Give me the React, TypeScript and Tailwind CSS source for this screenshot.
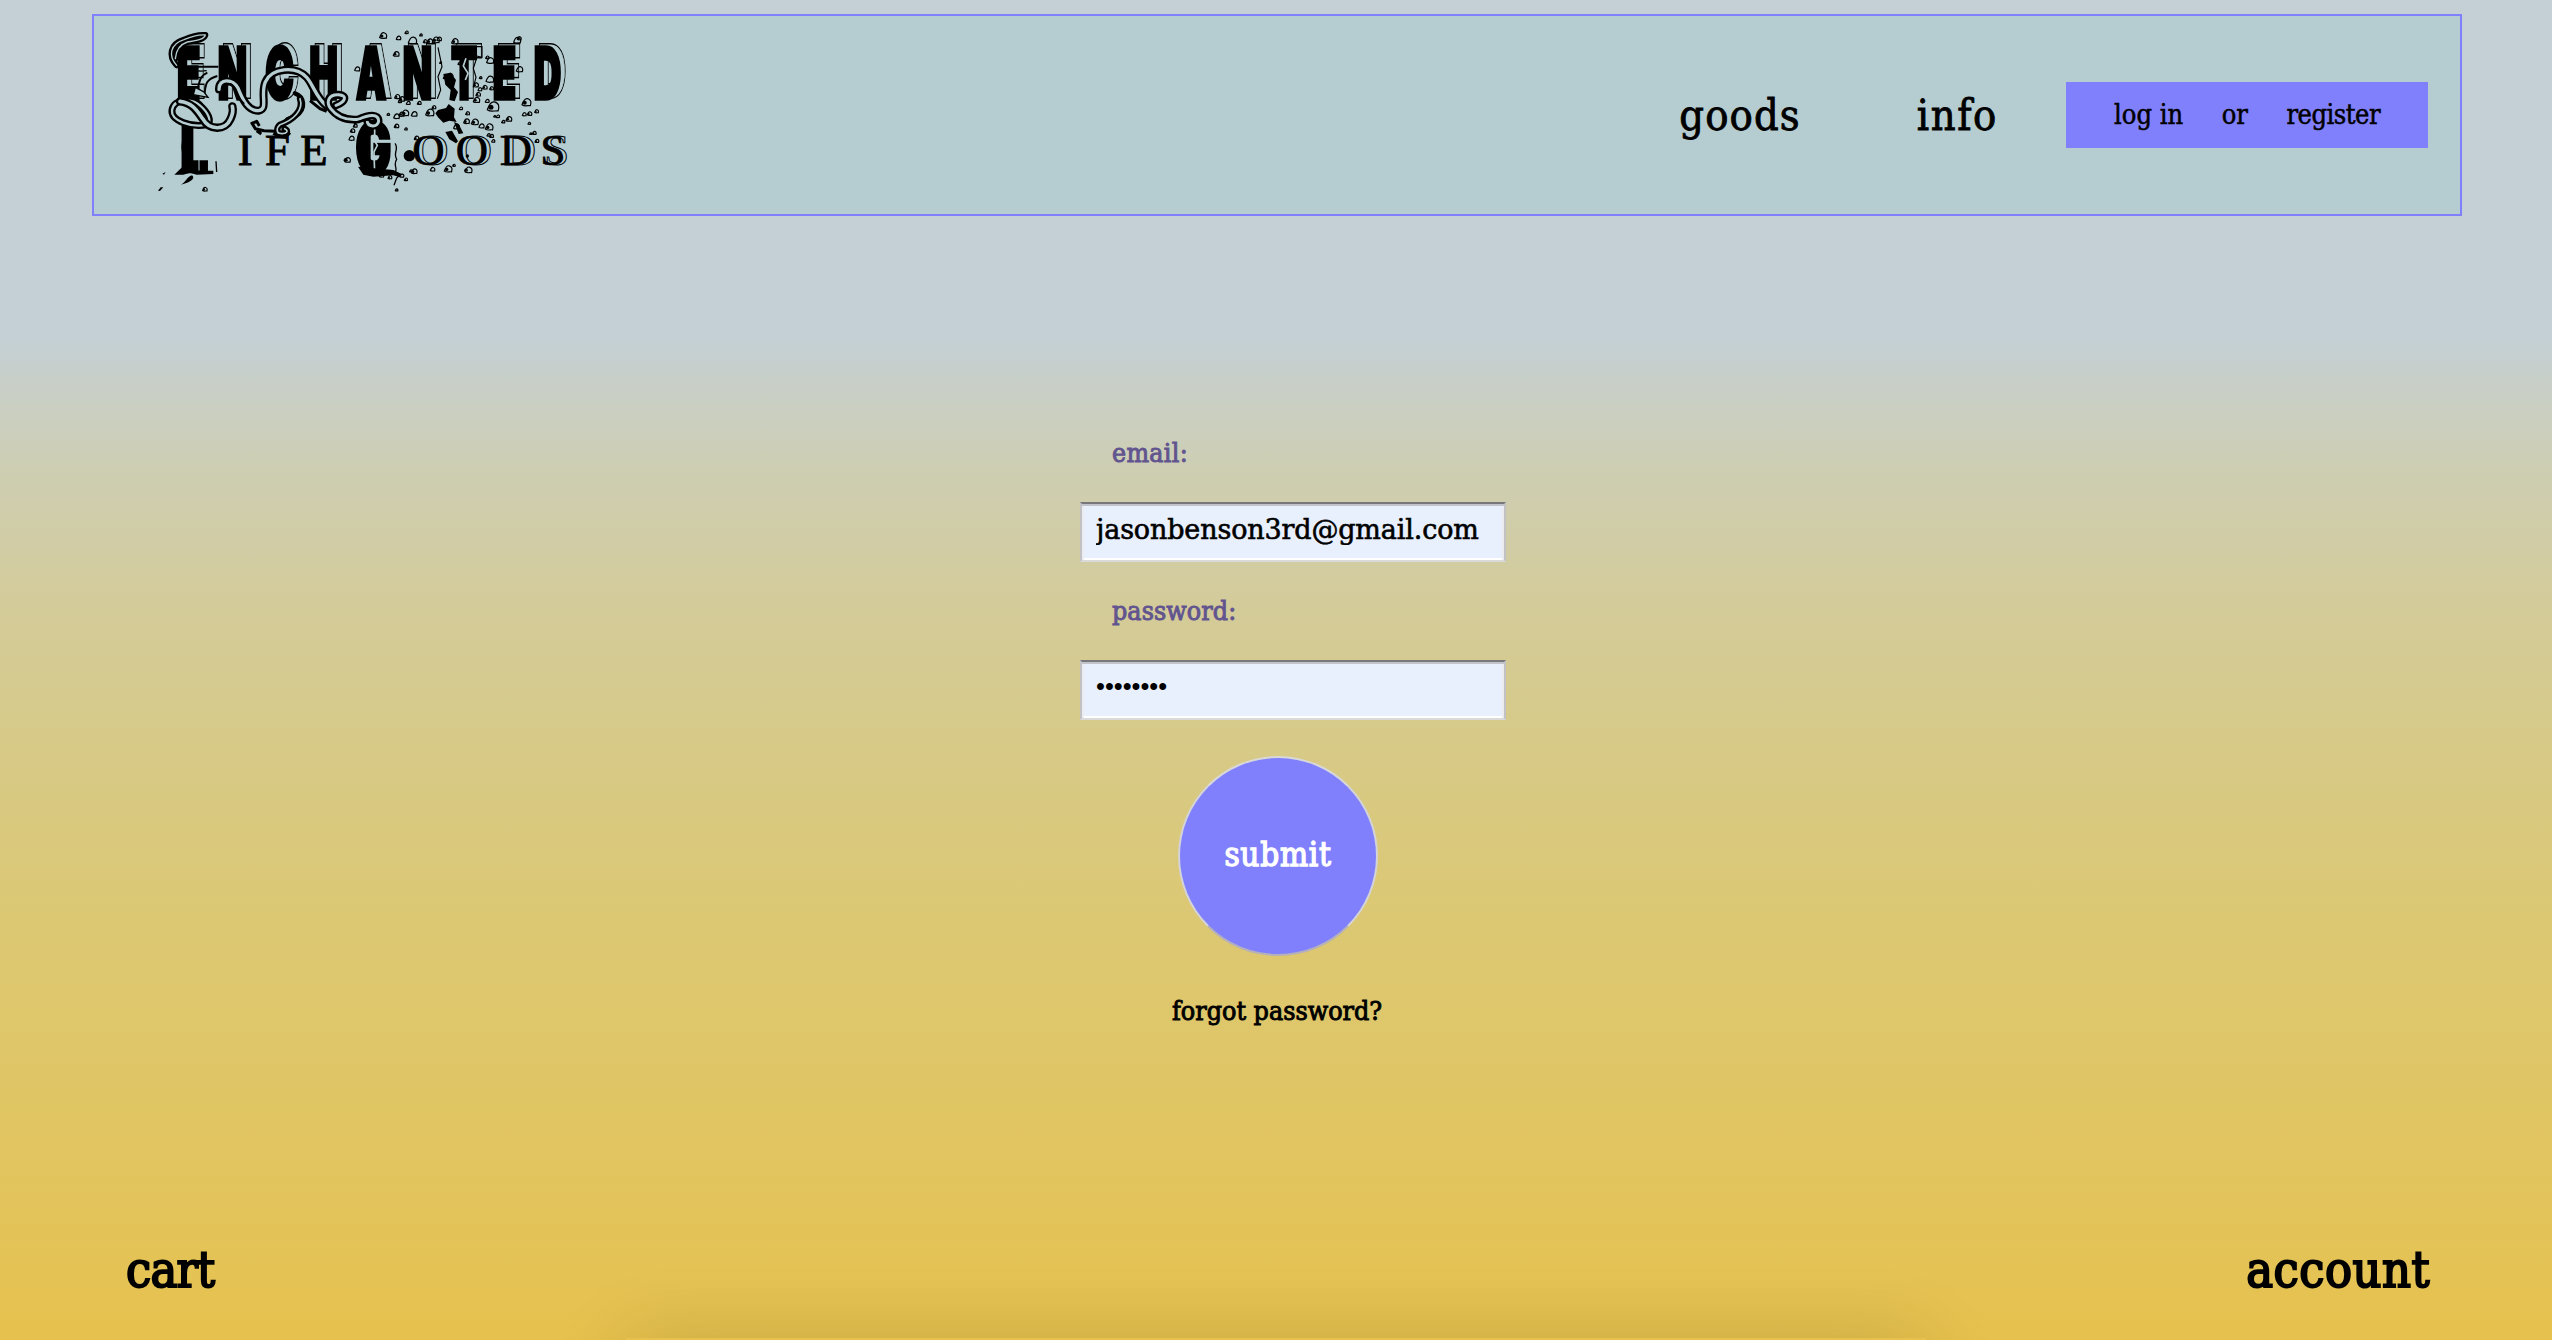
import React from "react";

const SERIF = "font-['DejaVu_Serif_Condensed','DejaVu_Serif',serif]";
const BG = "#b5cdd1";

/* A hollow ribbon: dark outline around a pale body. */
function Ribbon({ d, w = 19 }: { d: string; w?: number }) {
  return (
    <g fill="none" strokeLinecap="round" strokeLinejoin="round">
      <path d={d} stroke="#000" strokeWidth={w + 2} />
      <path d={d} stroke={BG} strokeWidth={w - 12} />
    </g>
  );
}

/* x, y, size of the outlined ink drops */
const drops: [number, number, number][] = [
  [910, 107, 11], [956, 114, 7], [980, 97, 5], [1023, 105, 4], [998, 122, 13], [1050, 124, 9], [1068, 120, 11], [1078, 117, 7],
  [1036, 124, 6], [1125, 124, 10], [1312, 121, 11], [1318, 115, 6], [949, 162, 9], [832, 207, 8], [1082, 188, 3], [1139, 190, 5],
  [1231, 182, 11], [1222, 172, 5], [1202, 233, 4], [1230, 238, 12], [1215, 262, 7], [1235, 265, 6], [1319, 208, 10], [952, 290, 8],
  [966, 297, 9], [985, 309, 6], [1018, 309, 6], [925, 343, 4], [950, 349, 9], [965, 343, 8], [976, 339, 11], [1003, 342, 9],
  [1050, 338, 13], [1062, 322, 6], [1143, 325, 5], [1163, 340, 6], [1240, 320, 18], [1222, 303, 6], [1340, 307, 14], [1370, 334, 6],
  [1333, 343, 6], [1349, 341, 7], [1287, 357, 9], [1254, 349, 5], [1270, 365, 5], [1244, 349, 3], [1348, 370, 4], [1160, 364, 9],
  [1185, 366, 11], [1205, 378, 8], [1228, 381, 12], [950, 378, 7], [978, 387, 4], [1010, 414, 7], [1235, 408, 6], [1240, 423, 5],
  [1226, 405, 5], [1363, 399, 6], [1352, 401, 3], [1371, 423, 6], [803, 480, 9], [796, 479, 4], [1003, 514, 9], [993, 513, 4],
  [1058, 508, 7], [1105, 507, 12], [1122, 496, 4], [1166, 510, 11], [1158, 510, 4], [978, 538, 5], [966, 527, 6], [950, 570, 4],
  [818, 392, 7], [815, 415, 8], [826, 377, 6], [930, 532, 6], [905, 526, 7], [1190, 300, 10], [1195, 283, 7], [1130, 380, 9], [375, 568, 7],
  [1188, 255, 8], [1200, 268, 6], [1110, 228, 10], [1095, 232, 5], [960, 304, 5],
];

function drop(x: number, y: number, r: number) {
  return `M${x - r} ${y + r * 0.5}C${x - r * 0.7} ${y - r * 0.4} ${x - r * 0.3} ${y - r * 0.9} ${x + r * 0.2} ${y - r * 0.8}C${x + r} ${y - r * 0.6} ${x + r} ${y + r * 0.1} ${x + r * 0.8} ${y + r * 0.7}C${x + r * 0.3} ${y + r * 0.6} ${x - r * 0.4} ${y + r} ${x - r} ${y + r * 0.5}Z`;
}

const xs = (list: number[], s: number) => list.map((v) => v / s).join(" ");
const topX = [291, 413, 556, 688, 828, 968, 1113, 1238, 1361];

function Logo() {
  return (
    <svg viewBox="222 90 1260 504" className="h-[168px] w-[420px] overflow-visible" role="img" aria-label="Enchanted Life Goods">
      {/* upper line, with a thin offset outline behind it */}
      <g fontFamily="Inter, Roboto, sans-serif" fontWeight={900} fontSize={216}>
        <use href="#word-top" x={14} y={-5} fill="#000" stroke="#000" strokeWidth={12} />
        <use href="#word-top" x={14} y={-5} fill={BG} stroke={BG} strokeWidth={3} />
        <g fill="#000" stroke="#000" strokeWidth={10}>
          <text id="word-top" transform="scale(.53 1)" x={xs(topX, 0.53)} y={296}>ENCHANTED</text>
        </g>
      </g>
      {/* lower line, small capitals */}
      <g fontFamily="'Liberation Serif', serif" fontSize={134}>
        <g fill="#000" stroke="#000" strokeWidth={3}>
          <text x="473 555 661" y={495}>IFE</text>
        </g>
        <use href="#word-goods" x={12} y={0} fill={BG} stroke="#000" strokeWidth={3} />
        <g fill="#000" stroke="#000" strokeWidth={2}>
          <text id="word-goods" x="997 1127 1259 1381" y={495}>OODS</text>
        </g>
      </g>
      {/* initials */}
      <g fontFamily="Inter, Roboto, sans-serif" fontWeight={900} stroke="#000" strokeWidth={8}>
        <text transform="scale(.76 1)" x={301 / 0.76} y={516} fontSize={196}>L</text>
        <text transform="scale(.68 1)" x={826 / 0.68} y={520} fontSize={212}>G</text>
      </g>
      <path d="M842 395L872 376V518L842 500L834 470V420Z" />
      <g fill="none" stroke={BG} strokeWidth={5}>
        <path d="M884 382V424L892 436L882 456L884 522M884 425H950" />
        <path d="M357 480V512" strokeWidth={3} />
        <path d="M1158 175L1150 198L1164 220L1156 240M1128 300L1134 340L1128 360L1140 395" />
      </g>
      <path d="M945 430C958 445 938 460 950 478C938 495 955 505 945 518L962 522L950 534L942 556M312 388L306 440L312 500M408 484L410 516" fill="none" stroke="#000" strokeWidth={4} />

      {/* ribbons */}
      <Ribbon d="M290 196C264 168 270 132 312 119C335 109 356 103 376 105C372 120 345 122 322 126C298 134 288 150 286 176" w={16} />
      <path d="M330 200H415M350 272C362 250 352 232 382 218M372 292C378 262 370 240 412 228" fill="none" stroke="#000" strokeWidth={6} />
      <path d="M340 210C352 214 366 214 380 212M346 262L340 284L384 292L372 276Z" fill={BG} stroke="#000" strokeWidth={4} />
      <Ribbon d="M382 374C332 384 272 362 276 330C282 296 336 292 362 318C384 338 396 362 382 374" w={19} />
      <Ribbon d="M300 304C338 308 352 334 368 356C388 392 436 392 451 358C458 344 460 330 457 319" w={23} />
      <Ribbon d="M417 268C416 234 458 236 474 264C490 304 506 334 536 332C566 328 540 284 556 246C574 204 646 196 680 232C700 254 706 290 740 318" w={22} />
      <path d="M436 262C450 240 464 258 472 290L492 312" fill="none" stroke="#000" strokeWidth={7} />
      <path d="M645 280C672 290 680 324 648 348L622 358" fill="none" stroke="#000" strokeWidth={14} strokeLinecap="round" />
      <Ribbon d="M660 296C672 330 640 360 600 374C588 384 590 400 600 400C620 404 628 392 614 386" w={17} />
      <path d="M514 366L526 386L552 392L586 394M512 372L530 364L538 378M530 392L544 402M580 400C596 412 616 414 630 398" fill="none" stroke="#000" strokeWidth={9} strokeLinejoin="round" />
      <path d="M690 302L720 326L740 334" fill="none" stroke="#000" strokeWidth={9} />
      <Ribbon d="M768 316C796 306 804 286 776 284C744 282 738 308 752 326C772 352 800 362 836 358C866 344 896 340 896 364C890 384 866 380 862 366" w={21} />
      <path d="M822 372C840 358 870 356 888 368" fill="none" stroke="#000" strokeWidth={5} />

      {/* ink */}
      <g fill="none" stroke="#000" strokeWidth={3.6}>
        {drops.map(([x, y, r], i) => <path key={i} d={drop(x, y, r)} />)}
      </g>
      <g>
        {drops.filter((_, i) => i % 3 !== 1).map(([x, y, r], i) => <circle key={i} cx={x - r * 0.4} cy={y + r * 0.1} r={r * 0.42} />)}
        <path d="M1090 222L1112 218L1128 240L1122 262L1134 276L1124 304L1108 300L1112 270L1096 254ZM1074 330L1098 324L1106 312L1124 326L1122 352L1130 366L1108 362L1090 368L1074 352L1066 340ZM1096 396L1116 392L1134 424L1128 430L1108 418ZM1122 366L1136 372L1150 400L1136 402Z" />
        <circle cx={988} cy={467} r={17} />
        <circle cx={1162} cy={468} r={5} />
        <path d="M283 524L306 502L325 512H400V522L350 524L330 518L310 524ZM302 554C318 548 320 530 336 526C348 536 330 548 302 554ZM234 572L242 562H250L240 573ZM247 521L257 516L252 524ZM834 500L850 524L880 530L940 526L960 532V520L940 510Z" />
        <path d="M1190 140H1206V172L1190 168M1188 180L1180 205L1188 232L1180 262M1074 142L1086 200L1074 230L1082 270L1072 296" fill="none" stroke="#000" strokeWidth={3.5} />
      </g>
    </svg>
  );
}

const fieldClass =
  "block h-[60px] w-[426px] rounded-none border-2 border-t-[#77787b] border-r-[#c2c2c4] border-b-[#dadada] border-l-[#c2c2c4] bg-[#e8effd] pl-[14px] pr-2 text-black outline-none shadow-[inset_0_2px_0_#c1c4cb,inset_2px_0_0_#ececf0,inset_-2px_0_0_#ececf0,inset_0_-2px_0_#ffffff]";

export default function App() {
  return (
    <div
      className={`relative flex h-[1340px] w-full flex-col overflow-hidden bg-[linear-gradient(180deg,#c4d0d6_0px,#c4d0d6_335px,#c9cfc6_390px,#cdceb2_470px,#d1cca5_545px,#d3cb9a_600px,#d7ca88_740px,#dcc873_920px,#e0c564_1100px,#e3c45b_1210px,#e6c14d_1340px)] text-black ${SERIF}`}
    >
      <header className="mt-[14px] mr-[90px] ml-[92px] flex h-[202px] shrink-0 items-start justify-between border-2 border-[#8080fc] bg-[#b5cdd1]">
        <a className="mt-[14px] ml-[60px]">
          <Logo />
        </a>
        <nav className="mt-[66px] mr-[32px] flex h-[66px] items-center">
          <a className="mr-[116px] text-[43px] leading-[66px] tracking-[1.1px] [-webkit-text-stroke:0.8px_black]">goods</a>
          <a className="mr-[68px] text-[43px] leading-[66px] tracking-[1.6px] [-webkit-text-stroke:0.8px_black]">info</a>
          <div className="flex h-[66px] w-[362px] justify-between bg-[#8080fc] pr-[48px] pl-[48px] text-[27px] leading-[65px] [-webkit-text-stroke:0.5px_black]">
            <a>log in</a>
            <span>or</span>
            <a className="tracking-[-0.5px]">register</a>
          </div>
        </nav>
      </header>

      <main className="ml-[1080px] flex w-[426px] grow flex-col pt-[217px]">
        <label className="ml-[32px] h-[69px] text-[26.5px] leading-[40px] tracking-[0.3px] text-[#62548f] [-webkit-text-stroke:0.9px_#62548f]">email:</label>
        <input readOnly className={`${fieldClass} pb-[5px] font-['DejaVu_Serif',serif] text-[27px] tracking-[-0.15px] [-webkit-text-stroke:0.6px_black]`} defaultValue="jasonbenson3rd@gmail.com" />
        <label className="mt-[29px] ml-[32px] h-[69px] text-[26.5px] leading-[40px] tracking-[0.1px] text-[#62548f] [-webkit-text-stroke:0.9px_#62548f]">password:</label>
        <input readOnly type="password" className={`${fieldClass} pb-[8px] font-['Liberation_Sans',sans-serif] text-[25.4px]`} defaultValue="password" />
        <button className="mt-[36px] ml-[98px] size-[200px] rounded-full border-2 border-t-[#d8d8d8] border-r-[#d4d4d8] border-b-[#b4b0bc] border-l-[#d4d4d8] bg-[#8080fc] pb-[3px] text-[33px] tracking-[0.7px] text-white [-webkit-text-stroke:1.3px_white]">submit</button>
        <a className="mt-[35px] ml-[92px] text-[26.6px] leading-[40px] whitespace-nowrap [-webkit-text-stroke:0.9px_black]">forgot password?</a>
      </main>

      <footer className="mr-[122px] mb-[35px] ml-[126px] flex justify-between text-[50px] leading-[70px] [-webkit-text-stroke:2px_black]">
        <a className="tracking-[-0.8px]">cart</a>
        <a className="tracking-[0.5px]">account</a>
      </footer>

      <div className="absolute top-[1338px] left-[626px] h-[100px] w-[1300px] shadow-[0_0_78px_rgba(0,0,0,0.13)]" />
    </div>
  );
}
